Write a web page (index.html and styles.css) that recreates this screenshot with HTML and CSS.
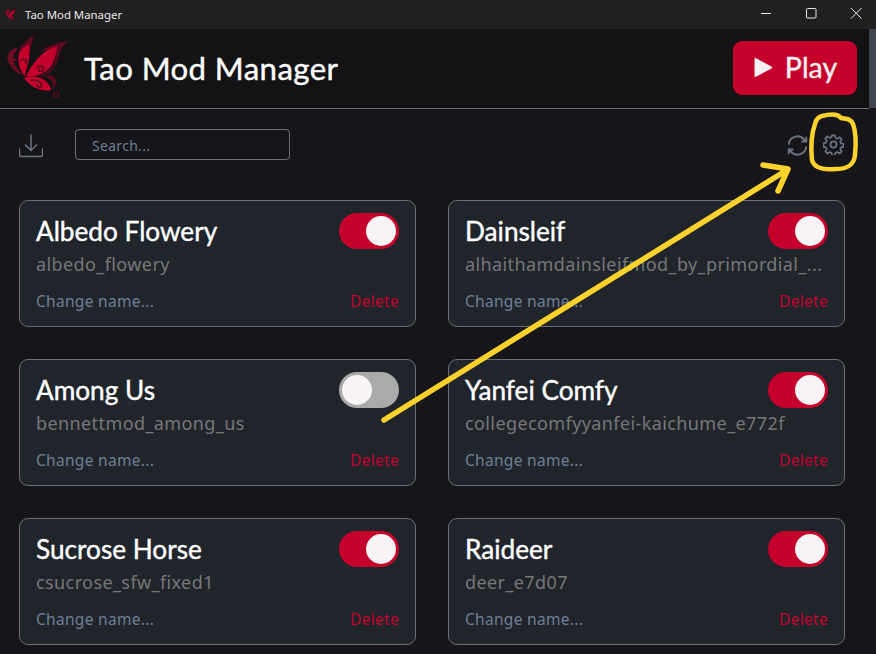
FILE: index.html
```html
<!DOCTYPE html>
<html lang="en">
<head>
<meta charset="utf-8">
<title>Tao Mod Manager</title>
<link rel="stylesheet" href="styles.css">
</head>
<body>
<div class="titlebar">
  <svg class="tb-icon" viewBox="0 0 240 225"><use href="#fly"/></svg>
  <span class="tb-title">Tao Mod Manager</span>
  <div class="tb-controls">
    <svg class="tb-btn" viewBox="0 0 46 29"><path d="M18 13.500h10" stroke="#e8e8e8" fill="none"/></svg>
    <svg class="tb-btn" viewBox="0 0 46 29"><rect x="18.500" y="8.500" width="9.500" height="9.500" rx="1" stroke="#e8e8e8" fill="none"/></svg>
    <svg class="tb-btn" viewBox="0 0 46 29"><path d="M18 8l10.500 10.500M28.500 8L18 18.500" stroke="#e8e8e8" fill="none"/></svg>
  </div>
</div>
<div class="app">
  <div class="main">
    <header class="header">
      <svg class="logo" viewBox="0 0 240 225">
        <g id="fly">
          <path d="M72 122C84 80 92 50 103 12C80 25 62 45 56 62C70 75 66 100 72 122Z" fill="#5a0a1c"/>
          <path d="M205 30C170 35 140 45 120 62C150 50 165 58 166 72C170 100 150 125 110 140C140 140 170 115 178 70C182 50 195 40 205 30Z" fill="#5a0a1c"/>
          <path d="M135 138C160 145 165 165 155 178C165 175 172 155 165 142C158 132 145 130 135 138Z" fill="#5a0a1c"/>
          <path d="M52 50C26 55 16 75 26 95C36 114 50 124 68 134C52 110 30 90 42 72C46 62 52 56 52 50Z" fill="#6e0c22"/>
          <path d="M88 40C70 48 56 62 55 78C53 100 62 120 74 136C82 110 92 72 88 40Z" fill="#c4002b"/>
          <path d="M172 45C135 55 105 82 78 136C105 140 135 128 152 108C165 90 168 65 172 45Z" fill="#c4002b"/>
          <path d="M72 140C100 132 128 140 142 155C150 165 155 172 152 178C130 182 100 170 88 158C80 152 76 146 72 140Z" fill="#c4002b"/>
          <path d="M110 112C120 100 134 104 130 116C126 124 114 122 118 114" fill="none" stroke="#5a0a1c" stroke-width="5"/>
          <path d="M62 90C72 78 84 90 76 98" fill="none" stroke="#5a0a1c" stroke-width="5"/>
          <path d="M92 148C110 144 128 154 124 166C118 172 108 166 114 160" fill="none" stroke="#5a0a1c" stroke-width="5"/>
          <path d="M40 100C32 85 46 78 48 90" fill="none" stroke="#8a0a26" stroke-width="4"/>
          <circle cx="168" cy="192" r="8" fill="none" stroke="#5a0a1c" stroke-width="4"/>
        </g>
      </svg>
      <h1 class="app-title">Tao Mod Manager</h1>
      <button class="play">
        <svg class="play-icon" viewBox="0 0 20 20"><path d="M1.500 1.500a1 1 0 0 1 1.500-.8L18.500 9a1.200 1.200 0 0 1 0 2L3 19.300a1 1 0 0 1-1.500-.8Z" fill="#f8f0f2"/></svg>
        <span>Play</span>
      </button>
    </header>
    <div class="toolbar">
      <svg class="icon dl" viewBox="0 0 24 24"><path d="M.5 15v5.500a2 2 0 0 0 2 2h19a2 2 0 0 0 2-2V15M12 1v15M6.500 11l5.500 5.500 5.500-5.500" fill="none" stroke="#6b7380" stroke-width="1.500" stroke-linecap="round" stroke-linejoin="round"/></svg>
      <div class="search">Search...</div>
      <svg class="icon refresh" viewBox="0 0 24 24"><path d="M2 11A10 10 0 0 1 19.500 5L22 7.500M22 2v5.500h-5.500M22 13A10 10 0 0 1 4.500 19L2 16.500M2 22v-5.500h5.500" fill="none" stroke="#6b7380" stroke-width="2.200"/></svg>
      <svg class="icon gear" viewBox="0 0 24 24"><path d="M10.300 1.500h3.400l.6 3 2.200.9 2.500-1.700 2.400 2.400-1.700 2.500.9 2.200 2.900.6v3.200l-2.900.6-.9 2.200 1.700 2.500-2.400 2.400-2.500-1.700-2.200.9-.6 2.900h-3.400l-.6-2.900-2.200-.9-2.500 1.700-2.400-2.400 1.700-2.500-.9-2.200-2.900-.6V10.400l2.900-.6.9-2.200-1.700-2.500 2.400-2.400 2.500 1.700 2.200-.9Z" fill="none" stroke="#6b7380" stroke-width="2" stroke-linejoin="round"/><circle cx="12" cy="12" r="3.500" fill="none" stroke="#6b7380" stroke-width="2"/></svg>
    </div>
    <div class="grid">
      <article class="card">
        <div class="card-top"><h2 class="name">Albedo Flowery</h2><span class="toggle on"></span></div>
        <div class="slug">albedo_flowery</div>
        <div class="card-foot"><span class="rename">Change name...</span><span class="del">Delete</span></div>
      </article>
      <article class="card">
        <div class="card-top"><h2 class="name">Dainsleif</h2><span class="toggle on"></span></div>
        <div class="slug">alhaithamdainsleifmod_by_primordial_...</div>
        <div class="card-foot"><span class="rename">Change name...</span><span class="del">Delete</span></div>
      </article>
      <article class="card">
        <div class="card-top"><h2 class="name">Among Us</h2><span class="toggle"></span></div>
        <div class="slug">bennettmod_among_us</div>
        <div class="card-foot"><span class="rename">Change name...</span><span class="del">Delete</span></div>
      </article>
      <article class="card">
        <div class="card-top"><h2 class="name">Yanfei Comfy</h2><span class="toggle on"></span></div>
        <div class="slug">collegecomfyyanfei-kaichume_e772f</div>
        <div class="card-foot"><span class="rename">Change name...</span><span class="del">Delete</span></div>
      </article>
      <article class="card">
        <div class="card-top"><h2 class="name">Sucrose Horse</h2><span class="toggle on"></span></div>
        <div class="slug">csucrose_sfw_fixed1</div>
        <div class="card-foot"><span class="rename">Change name...</span><span class="del">Delete</span></div>
      </article>
      <article class="card">
        <div class="card-top"><h2 class="name">Raideer</h2><span class="toggle on"></span></div>
        <div class="slug">deer_e7d07</div>
        <div class="card-foot"><span class="rename">Change name...</span><span class="del">Delete</span></div>
      </article>
    </div>
  </div>
  <div class="scrollbar"><div class="thumb"></div></div>
</div>
<svg class="annotation" viewBox="0 0 876 654">
  <path d="M384 420L787 170M763 165L788 169L778 191" fill="none" stroke="#fdd22c" stroke-width="5.500" stroke-linecap="round" stroke-linejoin="round"/>
  <path d="M815 124C811 135 811 150 812 160C814 168 822 170 835 169C848 169 854 165 855 155C856 145 856 132 853 124C850 118 846 119 841 118C838 114 830 114 822 116C818 117 816 120 815 124Z" fill="none" stroke="#fdd22c" stroke-width="4.500" stroke-linecap="round"/>
</svg>
</body>
</html>
```

FILE: styles.css
```css
* { box-sizing: border-box; }
html, body { margin: 0; height: 654px; overflow: hidden; background: #15151a; }
body { font-family: "Noto Sans", sans-serif; color: #fff; position: relative; }

.titlebar { height: 29px; background: #202020; display: flex; align-items: center; overflow: hidden; }
.tb-icon { width: 16px; height: 15px; margin-left: 3px; flex: none; }
.tb-title { margin-left: 6px; font: 11.400px/29px "Noto Sans", sans-serif; color: #e8e8e8; }
.tb-controls { margin-left: auto; margin-right: -3px; display: flex; flex: none; }
.tb-btn { width: 46px; height: 29px; display: block; flex: none; margin-left: -1px; }

.app { display: flex; height: 625px; }
.main { flex: 1; min-width: 0; }
.scrollbar { width: 7px; background: #15151a; flex: none; }
.thumb { height: 79px; background: #3d4550; }

.header { height: 80px; display: flex; align-items: center; border-bottom: 1px solid #6c6c70; background: #131316; padding-right: 12px; }
.logo { width: 80px; height: 75px; flex: none; }
.app-title { margin: 0 0 0 4px; font: 400 31.200px/1 "Lato", sans-serif; letter-spacing: .4px; -webkit-text-stroke: .4px #fff; color: #fff; }
.play { margin: 0 0 2px auto; width: 124px; height: 54px; border: 0; border-radius: 9px; background: #c4002b; color: #f8f0f2; display: flex; align-items: center; justify-content: center; gap: 12px; font: 400 28.500px/1 "Lato", sans-serif; -webkit-text-stroke: .4px #f8f0f2; padding: 0; }
.play-icon { width: 20px; height: 21px; }

.toolbar { height: 91px; display: flex; align-items: flex-start; padding: 20px 25px 0 19px; }
.icon { display: block; flex: none; }
.dl { width: 24px; height: 24px; margin-top: 5px; }
.search { width: 215px; height: 31px; margin-left: 32px; border: 1px solid #6f6f73; border-radius: 4px; padding-left: 16px; font-size: 14px; letter-spacing: .3px; line-height: 31px; color: #6f7f95; }
.refresh { width: 21px; height: 21px; margin-left: auto; margin-top: 6px; }
.gear { width: 21px; height: 21px; margin-left: 15px; margin-top: 5px; }

.grid { display: grid; grid-template-columns: 397px 397px; gap: 32px; padding-left: 19px; }
.card { height: 127px; background: #20252c; border: 1px solid #6c6f74; border-radius: 9px; padding: 12px 16px 0; }
.card-top { height: 36px; display: flex; justify-content: space-between; align-items: center; }
.name { margin: 0; font: 400 26.200px/36px "Lato", sans-serif; -webkit-text-stroke: .4px #fff; color: #fff; }
.toggle { width: 60px; height: 36px; border-radius: 18px; background: #aaa; display: flex; align-items: center; padding: 0 3px; flex: none; }
.toggle::before { content: ""; width: 30px; height: 30px; border-radius: 50%; background: #f8f3f4; }
.toggle.on { background: #c4002b; justify-content: flex-end; }
.slug { margin-top: 2px; font-size: 18px; letter-spacing: .4px; line-height: 27px; color: #777; white-space: nowrap; }
.card-foot { margin-top: 11px; display: flex; justify-content: space-between; font-size: 15.500px; letter-spacing: .3px; line-height: 24px; }
.rename { color: #6f7f95; }
.del { color: #c4002b; }

.annotation { position: absolute; left: 0; top: 0; width: 876px; height: 654px; pointer-events: none; }
```
